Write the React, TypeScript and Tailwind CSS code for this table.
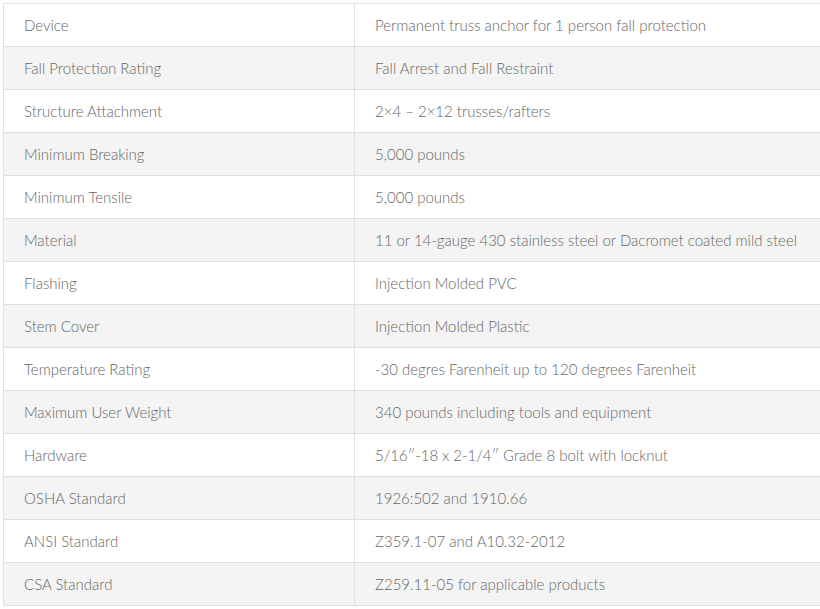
const rows: [string, string][] = [
  ['Device', 'Permanent truss anchor for 1 person fall protection'],
  ['Fall Protection Rating', 'Fall Arrest and Fall Restraint'],
  ['Structure Attachment', '2×4 – 2×12 trusses/rafters'],
  ['Minimum Breaking', '5,000 pounds'],
  ['Minimum Tensile', '5,000 pounds'],
  ['Material', '11 or 14-gauge 430 stainless steel or Dacromet coated mild steel'],
  ['Flashing', 'Injection Molded PVC'],
  ['Stem Cover', 'Injection Molded Plastic'],
  ['Temperature Rating', '-30 degres Farenheit up to 120 degrees Farenheit'],
  ['Maximum User Weight', '340 pounds including tools and equipment'],
  ['Hardware', '5/16″-18 x 2-1/4″ Grade 8 bolt with locknut'],
  ['OSHA Standard', '1926:502 and 1910.66'],
  ['ANSI Standard', 'Z359.1-07 and A10.32-2012'],
  ['CSA Standard', 'Z259.11-05 for applicable products'],
];

export default function App() {
  return (
    <div className="w-[820px] h-[609px] overflow-hidden bg-white pt-[3px] pl-[3px] font-['Lato','Liberation_Sans',sans-serif] font-light text-[15px] text-[#666]">
      <div className="w-[840px] border-t border-l border-[#e0e0e0]">
        {rows.map(([label, value], i) => (
          <div
            key={label}
            className={`grid grid-cols-[351px_1fr] border-b border-[#e0e0e0] ${i % 2 === 1 ? 'bg-[#f4f4f4]' : 'bg-white'}`}
          >
            <div className="h-[42px] flex items-center pl-5 border-r border-[#e0e0e0]">{label}</div>
            <div className="h-[42px] flex items-center pl-5">{value}</div>
          </div>
        ))}
      </div>
    </div>
  );
}
